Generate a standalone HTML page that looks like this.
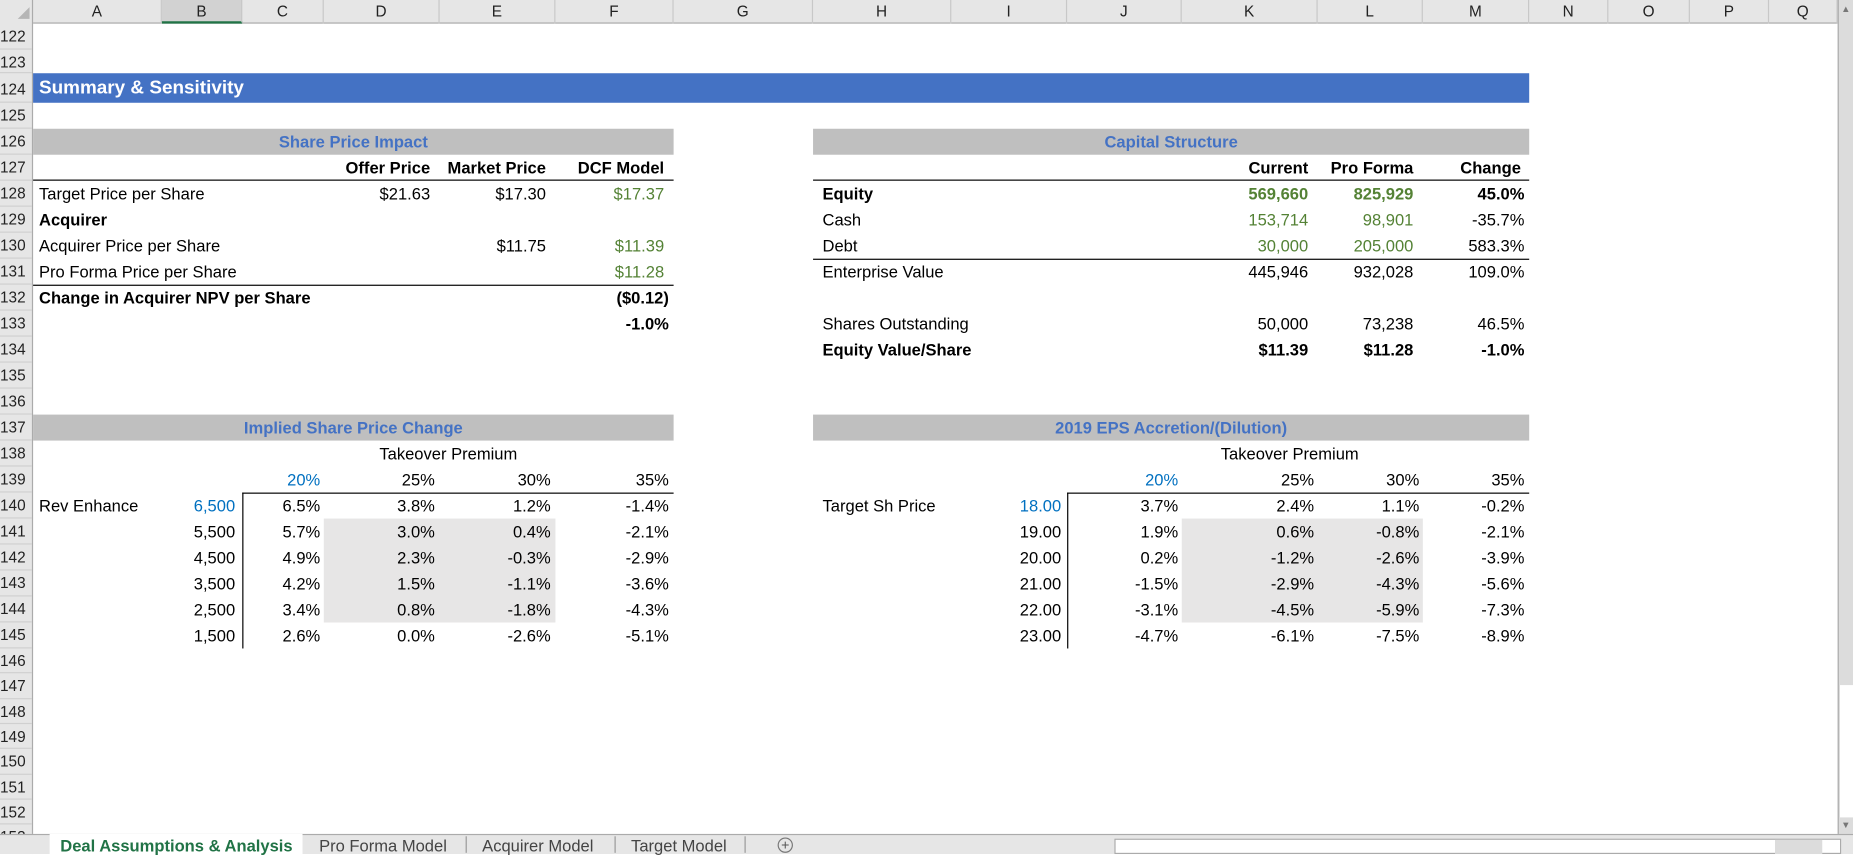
<!DOCTYPE html>
<html><head><meta charset="utf-8">
<style>
html,body{margin:0;padding:0;width:1853px;height:854px;overflow:hidden;background:#fff}
#w{position:absolute;left:0;top:0;width:1568px;height:723px;transform:scale(1.18176,1.1812);transform-origin:0 0;font-family:"Liberation Sans",Arial,sans-serif;font-size:14px;color:#000}
.a{position:absolute;white-space:nowrap}
.c{position:absolute;height:22px;line-height:22px;white-space:nowrap}
.r{text-align:right}
.b{font-weight:bold}
.g{color:#548235}
.bl{color:#0070c0}
.hd{position:absolute;top:0;height:20px;line-height:20px;text-align:center;color:#222;font-size:13px;border-right:1px solid #c8c8c8;box-sizing:border-box}
.rn{position:absolute;left:0;width:27px;font-size:13px;color:#222;border-bottom:1px solid #d0d0d0;box-sizing:border-box;line-height:21px}
</style></head><body><div id="w">
<!-- header row -->
<div class="a" style="left:0;top:0;width:1555px;height:20px;background:#e6e6e6;border-bottom:1px solid #ababab;box-sizing:border-box"></div>
<div class="a" style="left:0;top:0;width:28px;height:723px;background:#e6e6e6;border-right:1px solid #ababab;box-sizing:border-box"></div>
<svg class="a" style="left:14px;top:5px" width="12" height="12"><polygon points="11,1 11,11 1,11" fill="#b5b5b5"/></svg>
<div class="hd" style="left:28px;width:109px">A</div>
<div class="hd" style="left:137px;width:68px;background:#d2d2d2;border-bottom:2px solid #217346">B</div>
<div class="hd" style="left:205px;width:69px">C</div>
<div class="hd" style="left:274px;width:98px">D</div>
<div class="hd" style="left:372px;width:98px">E</div>
<div class="hd" style="left:470px;width:100px">F</div>
<div class="hd" style="left:570px;width:118px">G</div>
<div class="hd" style="left:688px;width:117px">H</div>
<div class="hd" style="left:805px;width:98px">I</div>
<div class="hd" style="left:903px;width:97px">J</div>
<div class="hd" style="left:1000px;width:115px">K</div>
<div class="hd" style="left:1115px;width:89px">L</div>
<div class="hd" style="left:1204px;width:90px">M</div>
<div class="hd" style="left:1294px;width:67px">N</div>
<div class="hd" style="left:1361px;width:69px">O</div>
<div class="hd" style="left:1430px;width:67px">P</div>
<div class="hd" style="left:1497px;width:58px">Q</div>
<!-- row numbers -->
<div class="rn" style="top:20px;height:22px">122</div>
<div class="rn" style="top:42px;height:20px">123</div>
<div class="rn" style="top:62px;height:25px;line-height:27px">124</div>
<div class="rn" style="top:87px;height:22px">125</div>
<div class="rn" style="top:109px;height:22px">126</div>
<div class="rn" style="top:131px;height:22px">127</div>
<div class="rn" style="top:153px;height:22px">128</div>
<div class="rn" style="top:175px;height:22px">129</div>
<div class="rn" style="top:197px;height:22px">130</div>
<div class="rn" style="top:219px;height:22px">131</div>
<div class="rn" style="top:241px;height:22px">132</div>
<div class="rn" style="top:263px;height:22px">133</div>
<div class="rn" style="top:285px;height:22px">134</div>
<div class="rn" style="top:307px;height:22px">135</div>
<div class="rn" style="top:329px;height:22px">136</div>
<div class="rn" style="top:351px;height:22px">137</div>
<div class="rn" style="top:373px;height:22px">138</div>
<div class="rn" style="top:395px;height:22px">139</div>
<div class="rn" style="top:417px;height:22px">140</div>
<div class="rn" style="top:439px;height:22px">141</div>
<div class="rn" style="top:461px;height:22px">142</div>
<div class="rn" style="top:483px;height:22px">143</div>
<div class="rn" style="top:505px;height:22px">144</div>
<div class="rn" style="top:527px;height:22px">145</div>
<div class="rn" style="top:549px;height:21px">146</div>
<div class="rn" style="top:570px;height:22px">147</div>
<div class="rn" style="top:592px;height:21px">148</div>
<div class="rn" style="top:613px;height:21px">149</div>
<div class="rn" style="top:634px;height:22px">150</div>
<div class="rn" style="top:656px;height:21px">151</div>
<div class="rn" style="top:677px;height:21px">152</div>
<div class="rn" style="top:698px;height:21px">153</div>

<!-- title bar -->
<div class="a" style="left:28px;top:62px;width:1266px;height:25px;background:#4472c4"></div>
<div class="a b" style="left:33px;top:62px;line-height:26px;color:#fff;font-size:16px">Summary &amp; Sensitivity</div>

<!-- Share Price Impact -->
<div class="a" style="left:28px;top:109px;width:542px;height:22px;background:#bfbfbf"></div>
<div class="c b" style="left:28px;width:542px;top:109px;text-align:center;color:#4472c4">Share Price Impact</div>
<div class="c b r" style="left:274px;width:90px;top:131px">Offer Price</div>
<div class="c b r" style="left:364px;width:98px;top:131px">Market Price</div>
<div class="c b r" style="left:470px;width:92px;top:131px">DCF Model</div>
<div class="a" style="left:28px;top:152px;width:542px;height:1px;background:#000"></div>
<div class="c" style="left:33px;top:153px">Target Price per Share</div>
<div class="c r" style="left:274px;width:90px;top:153px">$21.63</div>
<div class="c r" style="left:364px;width:98px;top:153px">$17.30</div>
<div class="c r g" style="left:470px;width:92px;top:153px">$17.37</div>
<div class="c b" style="left:33px;top:175px">Acquirer</div>
<div class="c" style="left:33px;top:197px">Acquirer Price per Share</div>
<div class="c r" style="left:364px;width:98px;top:197px">$11.75</div>
<div class="c r g" style="left:470px;width:92px;top:197px">$11.39</div>
<div class="c" style="left:33px;top:219px">Pro Forma Price per Share</div>
<div class="c r g" style="left:470px;width:92px;top:219px">$11.28</div>
<div class="a" style="left:28px;top:241px;width:542px;height:1px;background:#000"></div>
<div class="c b" style="left:33px;top:241px">Change in Acquirer NPV per Share</div>
<div class="c b r" style="left:470px;width:96px;top:241px">($0.12)</div>
<div class="c b r" style="left:470px;width:96px;top:263px">-1.0%</div>

<!-- Capital Structure -->
<div class="a" style="left:688px;top:109px;width:606px;height:22px;background:#bfbfbf"></div>
<div class="c b" style="left:688px;width:606px;top:109px;text-align:center;color:#4472c4">Capital Structure</div>
<div class="c b r" style="left:1000px;width:107px;top:131px">Current</div>
<div class="c b r" style="left:1107px;width:89px;top:131px">Pro Forma</div>
<div class="c b r" style="left:1204px;width:83px;top:131px">Change</div>
<div class="a" style="left:688px;top:152px;width:606px;height:1px;background:#000"></div>
<div class="c b" style="left:696px;top:153px">Equity</div>
<div class="c b r g" style="left:1000px;width:107px;top:153px">569,660</div>
<div class="c b r g" style="left:1107px;width:89px;top:153px">825,929</div>
<div class="c b r" style="left:1204px;width:86px;top:153px">45.0%</div>
<div class="c" style="left:696px;top:175px">Cash</div>
<div class="c r g" style="left:1000px;width:107px;top:175px">153,714</div>
<div class="c r g" style="left:1107px;width:89px;top:175px">98,901</div>
<div class="c r" style="left:1204px;width:86px;top:175px">-35.7%</div>
<div class="c" style="left:696px;top:197px">Debt</div>
<div class="c r g" style="left:1000px;width:107px;top:197px">30,000</div>
<div class="c r g" style="left:1107px;width:89px;top:197px">205,000</div>
<div class="c r" style="left:1204px;width:86px;top:197px">583.3%</div>
<div class="a" style="left:688px;top:219px;width:606px;height:1px;background:#000"></div>
<div class="c" style="left:696px;top:219px">Enterprise Value</div>
<div class="c r" style="left:1000px;width:107px;top:219px">445,946</div>
<div class="c r" style="left:1107px;width:89px;top:219px">932,028</div>
<div class="c r" style="left:1204px;width:86px;top:219px">109.0%</div>
<div class="c" style="left:696px;top:263px">Shares Outstanding</div>
<div class="c r" style="left:1000px;width:107px;top:263px">50,000</div>
<div class="c r" style="left:1107px;width:89px;top:263px">73,238</div>
<div class="c r" style="left:1204px;width:86px;top:263px">46.5%</div>
<div class="c b" style="left:696px;top:285px">Equity Value/Share</div>
<div class="c b r" style="left:1000px;width:107px;top:285px">$11.39</div>
<div class="c b r" style="left:1107px;width:89px;top:285px">$11.28</div>
<div class="c b r" style="left:1204px;width:86px;top:285px">-1.0%</div>

<!-- Implied Share Price Change -->
<div class="a" style="left:28px;top:351px;width:542px;height:22px;background:#bfbfbf"></div>
<div class="c b" style="left:28px;width:542px;top:351px;text-align:center;color:#4472c4">Implied Share Price Change</div>
<div class="c" style="left:321px;top:373px">Takeover Premium</div>
<div class="a" style="left:274px;top:439px;width:196px;height:88px;background:#e7e6e6"></div>
<div class="a" style="left:205px;top:417px;width:365px;height:1px;background:#000"></div>
<div class="a" style="left:205px;top:417px;width:1px;height:132px;background:#000"></div>
<div class="c r bl" style="left:205px;width:66px;top:395px">20%</div>
<div class="c r" style="left:274px;width:94px;top:395px">25%</div>
<div class="c r" style="left:372px;width:94px;top:395px">30%</div>
<div class="c r" style="left:470px;width:96px;top:395px">35%</div>
<div class="c" style="left:33px;top:417px">Rev Enhance</div>

<!-- Right sensitivity -->
<div class="a" style="left:688px;top:351px;width:606px;height:22px;background:#bfbfbf"></div>
<div class="c b" style="left:688px;width:606px;top:351px;text-align:center;color:#4472c4">2019 EPS Accretion/(Dilution)</div>
<div class="c" style="left:1033px;top:373px">Takeover Premium</div>
<div class="a" style="left:1000px;top:439px;width:204px;height:88px;background:#e7e6e6"></div>
<div class="a" style="left:903px;top:417px;width:391px;height:1px;background:#000"></div>
<div class="a" style="left:903px;top:417px;width:1px;height:132px;background:#000"></div>
<div class="c r bl" style="left:903px;width:94px;top:395px">20%</div>
<div class="c r" style="left:1000px;width:112px;top:395px">25%</div>
<div class="c r" style="left:1115px;width:86px;top:395px">30%</div>
<div class="c r" style="left:1204px;width:86px;top:395px">35%</div>
<div class="c" style="left:696px;top:417px">Target Sh Price</div>

<div id="rows"></div>
<script>
var L=[["6,500","6.5%","3.8%","1.2%","-1.4%"],["5,500","5.7%","3.0%","0.4%","-2.1%"],["4,500","4.9%","2.3%","-0.3%","-2.9%"],["3,500","4.2%","1.5%","-1.1%","-3.6%"],["2,500","3.4%","0.8%","-1.8%","-4.3%"],["1,500","2.6%","0.0%","-2.6%","-5.1%"]];
var R=[["18.00","3.7%","2.4%","1.1%","-0.2%"],["19.00","1.9%","0.6%","-0.8%","-2.1%"],["20.00","0.2%","-1.2%","-2.6%","-3.9%"],["21.00","-1.5%","-2.9%","-4.3%","-5.6%"],["22.00","-3.1%","-4.5%","-5.9%","-7.3%"],["23.00","-4.7%","-6.1%","-7.5%","-8.9%"]];
var lc=[[137,62],[205,66],[274,94],[372,94],[470,96]];
var rc=[[805,93],[903,94],[1000,112],[1115,86],[1204,86]];
var h="";
for(var i=0;i<6;i++){var t=417+i*22;
for(var j=0;j<5;j++){h+='<div class="c r'+(i==0&&j==0?' bl':'')+'" style="left:'+lc[j][0]+'px;width:'+lc[j][1]+'px;top:'+t+'px">'+L[i][j]+'</div>';
h+='<div class="c r'+(i==0&&j==0?' bl':'')+'" style="left:'+rc[j][0]+'px;width:'+rc[j][1]+'px;top:'+t+'px">'+R[i][j]+'</div>';}}
document.getElementById("rows").innerHTML=h;
</script>

<!-- vertical scrollbar -->
<div class="a" style="left:1555px;top:0;width:13px;height:707px;background:#dcdcdc;border-left:1px solid #ababab;box-sizing:border-box"></div>
<div class="a" style="left:1557px;top:580px;width:11px;height:112px;background:#fff"></div>
<div class="a" style="left:1558px;top:3px;font-size:8px;color:#777">&#9650;</div>
<div class="a" style="left:1558px;top:694px;font-size:8px;color:#777">&#9660;</div>
<!-- tab bar -->
<div class="a" style="left:0;top:706px;width:1568px;height:17px;background:#e6e6e6;border-top:1px solid #ababab;box-sizing:border-box"></div>
<div class="a" style="left:42px;top:706px;width:214px;height:17px;background:#fff"></div>
<div class="a b" style="left:51px;top:707px;font-size:14px;line-height:18px;color:#217346">Deal Assumptions &amp; Analysis</div>
<div class="a" style="left:270px;top:707px;font-size:14px;line-height:18px;color:#444">Pro Forma Model</div>
<div class="a" style="left:394px;top:708px;height:14px;width:1px;background:#999"></div>
<div class="a" style="left:408px;top:707px;font-size:14px;line-height:18px;color:#444">Acquirer Model</div>
<div class="a" style="left:520px;top:708px;height:14px;width:1px;background:#999"></div>
<div class="a" style="left:534px;top:707px;font-size:14px;line-height:18px;color:#444">Target Model</div>
<div class="a" style="left:630px;top:708px;height:14px;width:1px;background:#999"></div>
<div class="a" style="left:658px;top:709px;width:13px;height:13px;border:1px solid #777;border-radius:50%;box-sizing:border-box;font-size:12px;line-height:11px;text-align:center;color:#555">+</div>
<div class="a" style="left:943px;top:710px;width:615px;height:13px;background:#fff;border:1px solid #ababab;box-sizing:border-box"></div>
<div class="a" style="left:1502px;top:711px;width:40px;height:12px;background:#dcdcdc"></div>
</div></body></html>
